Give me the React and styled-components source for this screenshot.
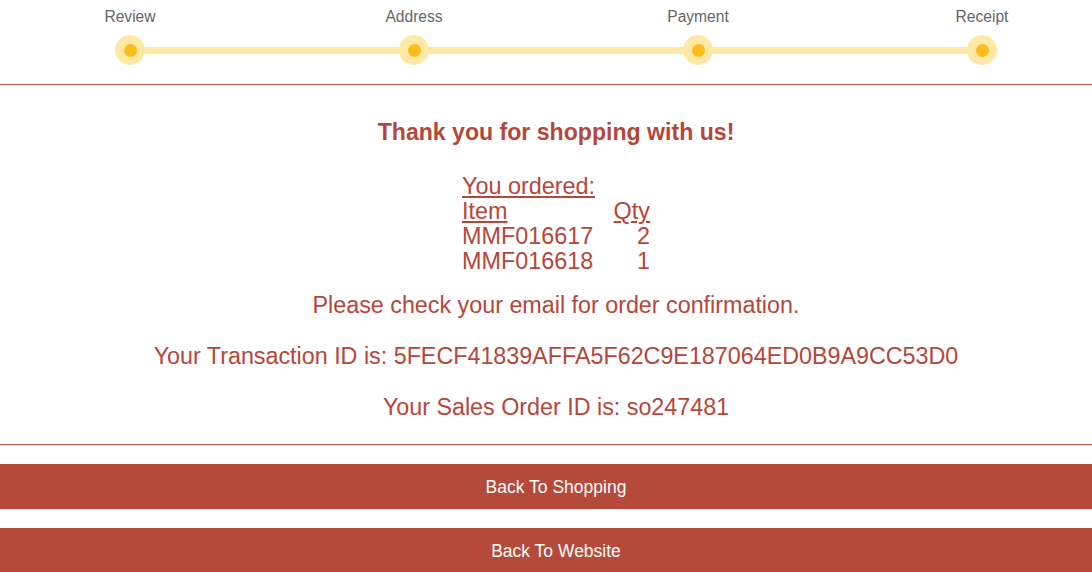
import React from "react";
import styled, { createGlobalStyle } from "styled-components";

const Global = createGlobalStyle`
  html, body { margin: 0; padding: 0; background: #fff; }
  body { font-family: "Liberation Sans", Arial, sans-serif; overflow: hidden; }
`;

const Page = styled.div`
  width: 1092px;
`;

const Stepper = styled.div`
  display: flex;
  align-items: flex-end;
  margin-left: 115px;
  width: 882px;
  padding-top: 7px;
  height: 58px;
`;

const Step = styled.div`
  position: relative;
  width: 30px;
  height: 58px;
  display: flex;
  flex-direction: column;
  align-items: center;
  justify-content: flex-end;
  flex-shrink: 0;
`;

const StepLabel = styled.div`
  position: absolute;
  top: 1px;
  left: 50%;
  transform: translateX(-50%);
  white-space: nowrap;
  font-size: 15.6px;
  line-height: 18px;
  color: #666;
`;

const Dot = styled.div`
  width: 30px;
  height: 30px;
  border-radius: 50%;
  background: #fde8a6;
  display: flex;
  align-items: center;
  justify-content: center;
  &::after {
    content: "";
    width: 13px;
    height: 13px;
    border-radius: 50%;
    background: #fcbc1c;
  }
`;

const Connector = styled.div`
  flex: 1;
  height: 7px;
  background: #fde8a6;
  margin-bottom: 11px;
  margin-left: -1px;
  margin-right: -1px;
`;

const Divider = styled.hr`
  border: 0;
  border-top: 1px solid #c25441;
  margin: ${(p) => p.$top}px 0 0 0;
  height: 0;
`;

const Content = styled.div`
  padding: 34px 0 0 20px;
  display: flex;
  flex-direction: column;
  align-items: center;
  color: #b5473a;
`;

const Heading = styled.h2`
  margin: 0;
  font-size: 23.1px;
  line-height: 26px;
  font-weight: bold;
`;

const Table = styled.table`
  margin-top: 29px;
  width: 188px;
  border-collapse: collapse;
  font-size: 23.4px;
  line-height: 25px;
  td, th { padding: 0; font-weight: normal; }
`;

const Caption = styled.caption`
  text-align: left;
  text-decoration: underline;
  white-space: nowrap;
`;

const HeadCell = styled.th`
  text-align: ${(p) => (p.$right ? "right" : "left")};
  text-decoration: underline;
`;

const Cell = styled.td`
  text-align: ${(p) => (p.$right ? "right" : "left")};
`;

const Para = styled.p`
  margin: ${(p) => p.$top}px 0 0 0;
  font-size: 23.3px;
  line-height: 25px;
  white-space: nowrap;
`;

const Buttons = styled.div`
  display: flex;
  flex-direction: column;
  gap: 19px;
  margin-top: 19px;
`;

const Button = styled.button`
  display: block;
  width: 100%;
  height: 45px;
  border: 0;
  background: #b5493a;
  color: #fff;
  font-family: "Liberation Sans", Arial, sans-serif;
  font-size: 17.5px;
  padding: 2px 0 0 20px;
  cursor: pointer;
`;

const steps = ["Review", "Address", "Payment", "Receipt"];

export default function App() {
  return (
    <Page>
      <Global />
      <Stepper>
        {steps.map((s, i) => (
          <React.Fragment key={s}>
            {i > 0 && <Connector />}
            <Step>
              <StepLabel>{s}</StepLabel>
              <Dot />
            </Step>
          </React.Fragment>
        ))}
      </Stepper>
      <Divider $top={19} />
      <Content>
        <Heading>Thank you for shopping with us!</Heading>
        <Table>
          <Caption>You ordered:</Caption>
          <thead>
            <tr>
              <HeadCell>Item</HeadCell>
              <HeadCell $right>Qty</HeadCell>
            </tr>
          </thead>
          <tbody>
            <tr>
              <Cell>MMF016617</Cell>
              <Cell $right>2</Cell>
            </tr>
            <tr>
              <Cell>MMF016618</Cell>
              <Cell $right>1</Cell>
            </tr>
          </tbody>
        </Table>
        <Para $top={19}>Please check your email for order confirmation.</Para>
        <Para $top={26}>
          Your Transaction ID is: 5FECF41839AFFA5F62C9E187064ED0B9A9CC53D0
        </Para>
        <Para $top={26}>Your Sales Order ID is: so247481</Para>
      </Content>
      <Divider $top={24} />
      <Buttons>
        <Button>Back To Shopping</Button>
        <Button>Back To Website</Button>
      </Buttons>
    </Page>
  );
}
